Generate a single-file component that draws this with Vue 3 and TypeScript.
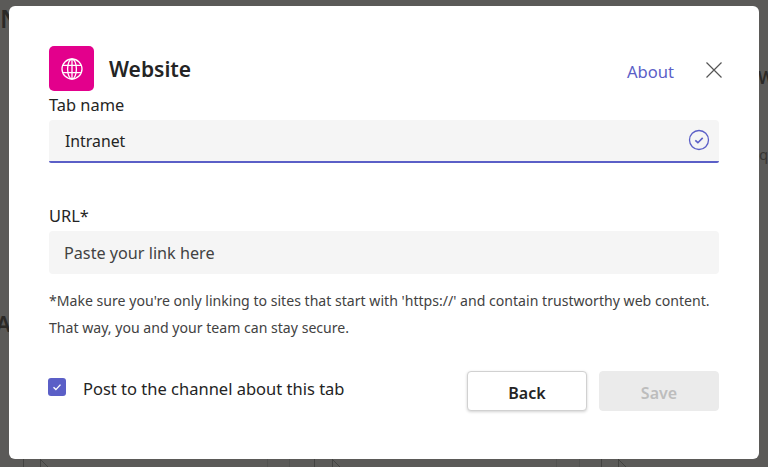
<script setup lang="ts">
import { ref } from "vue"

const tabName = ref("Intranet")
const url = ref("")
const postToChannel = ref(true)

// page content that shows below the dialog's bottom edge
const faintLines = [267, 289, 556, 579]
const tileLines = [23, 40, 314, 332, 601, 618]
const tileCorners = [40, 332, 618]
</script>

<template>
  <div class="backdrop">
    <span class="behind behind--n">N</span>
    <span class="behind behind--a">A</span>
    <span class="behind behind--w">W</span>
    <span class="behind behind--q">q</span>
    <svg class="tiles" width="768" height="8" viewBox="0 0 768 8" fill="none">
      <path v-for="x in faintLines" :key="x" :d="`M${x + 0.5} 0v8`" stroke="#525250" />
      <path v-for="x in tileLines" :key="x" :d="`M${x + 0.5} 0v8`" stroke="#434341" />
      <path v-for="x in tileCorners" :key="x" :d="`M${x} 0l8 8`" stroke="#434341" />
    </svg>
    <div class="dialog">
      <header class="head">
        <div class="app-icon">
          <svg width="24" height="24" viewBox="0 0 24 24" fill="none" stroke="#fff" stroke-width="1.3">
            <circle cx="12" cy="12" r="10" />
            <ellipse cx="12" cy="12" rx="4.4" ry="10" />
            <path d="M12 2v20M3 8.4h18M3 15.6h18" />
          </svg>
        </div>
        <h1 class="title">Website</h1>
        <a class="about">About</a>
        <button class="close" aria-label="Close">
          <svg width="16" height="16" viewBox="0 0 16 16" stroke="#555" stroke-width="1.2">
            <path d="M.5.5l15 15M15.5.5l-15 15" />
          </svg>
        </button>
      </header>

      <label class="label">Tab name</label>
      <div class="field field--active">
        <input v-model="tabName" class="input input--name" />
        <svg class="valid" width="22" height="22" viewBox="0 0 22 22" fill="none" stroke="#5b5fc7">
          <circle cx="11" cy="11" r="9.5" stroke-width="1.3" />
          <path d="M7.3 11.3l2.6 2.4 4.8-4.8" stroke-width="1.6" />
        </svg>
      </div>

      <label class="label label--url">URL*</label>
      <div class="field">
        <input v-model="url" class="input" placeholder="Paste your link here" />
      </div>

      <p class="note">
        *Make sure you're only linking to sites that start with 'https://' and contain trustworthy web content.<br />
        That way, you and your team can stay secure.
      </p>

      <footer class="foot">
        <label class="check">
          <input v-model="postToChannel" type="checkbox" class="check-input" />
          <span class="box">
            <svg width="12" height="12" viewBox="0 0 12 12" fill="none" stroke="#fff" stroke-width="1.4">
              <path d="M2.5 6.3l2.4 2.3 4.6-5" />
            </svg>
          </span>
          <span class="check-text">Post to the channel about this tab</span>
        </label>
        <div class="actions">
          <button class="btn">Back</button>
          <button class="btn btn--disabled" disabled>Save</button>
        </div>
      </footer>
    </div>
  </div>
</template>

<style>
html, body { margin: 0; background: #5b5a58; }
</style>

<style scoped>
.backdrop {
  position: relative;
  width: 768px;
  height: 467px;
  overflow: hidden;
  box-sizing: border-box;
  padding: 6px 9px 8px;
  background: #5b5a58;
  font-family: "Noto Sans", "Open Sans", sans-serif;
  color: #242424;
}
.behind {
  position: absolute;
  line-height: 1;
  font-weight: 600;
  color: #2b2926;
}
.behind--n { left: 0; top: 6px; font-size: 25px; }
.behind--a { left: -4px; top: 312px; font-size: 22px; }
.behind--w { left: 758px; top: 69px; font-size: 17px; }
.behind--q { left: 759px; top: 147px; font-size: 15px; font-weight: 400; color: #383633; }
.tiles {
  position: absolute;
  left: 0;
  bottom: 0;
}
.dialog {
  position: relative;
  box-sizing: border-box;
  width: 750px;
  height: 453px;
  padding: 40px 40px 0;
  background: #fff;
  border-radius: 6px;
}
.head {
  display: flex;
  align-items: center;
  height: 45px;
}
.app-icon {
  display: flex;
  align-items: center;
  justify-content: center;
  width: 45px;
  height: 45px;
  border-radius: 5px;
  background: #e3008c;
}
.title {
  margin: 0 0 0 15px;
  font-size: 21px;
  font-weight: 600;
  flex: 1;
}
.about {
  margin-top: 6px;
  font-size: 16.6px;
  color: #5b5fc7;
}
.close {
  display: flex;
  margin: 2px -3px 0 32px;
  padding: 0;
  border: 0;
  background: none;
}
.label {
  display: block;
  height: 24px;
  margin-top: 2px;
  font-size: 16.4px;
  line-height: 24px;
}
.label--url {
  margin-top: 41px;
  margin-bottom: 3px;
}
.field {
  position: relative;
  display: flex;
  align-items: center;
  box-sizing: border-box;
  height: 43px;
  margin-top: 3px;
  border-radius: 4px;
  background: #f5f5f5;
}
.field--active {
  border-bottom: 2px solid #5b5fc7;
  border-radius: 4px 4px 2px 2px;
}
.input {
  flex: 1;
  min-width: 0;
  padding: 1px 15px 0;
  border: 0;
  outline: 0;
  background: none;
  font: inherit;
  font-size: 16.2px;
  color: #242424;
}
.input--name {
  padding-left: 16px;
  font-size: 15.8px;
}
.input::placeholder {
  color: #424242;
  opacity: 1;
}
.valid {
  position: absolute;
  right: 9px;
  top: 9px;
}
.note {
  margin: 14px 0 0;
  font-size: 14.1px;
  line-height: 26.5px;
  color: #424242;
}
.foot {
  display: flex;
  align-items: center;
  justify-content: space-between;
  margin-top: 30px;
}
.check {
  display: flex;
  align-items: center;
  margin-left: -1px;
  font-size: 16.5px;
}
.check-input {
  position: absolute;
  opacity: 0;
  width: 0;
  height: 0;
}
.box {
  display: flex;
  align-items: center;
  justify-content: center;
  width: 18px;
  height: 18px;
  margin: -8px 17px 0 0;
  border-radius: 3px;
  background: #5b5fc7;
}
.check-text {
  margin-top: -6px;
}
.actions {
  display: flex;
  gap: 12px;
}
.btn {
  box-sizing: border-box;
  width: 120px;
  height: 40px;
  padding: 3px 0 0;
  border: 1px solid #d1d1d1;
  border-radius: 4px;
  background: #fff;
  box-shadow: 0 1px 3px rgb(0 0 0 / 0.18);
  font: inherit;
  font-size: 16px;
  font-weight: 600;
  color: #242424;
}
.btn--disabled {
  border-color: #ebebeb;
  background: #ebebeb;
  box-shadow: none;
  color: #bdbdbd;
}
</style>
